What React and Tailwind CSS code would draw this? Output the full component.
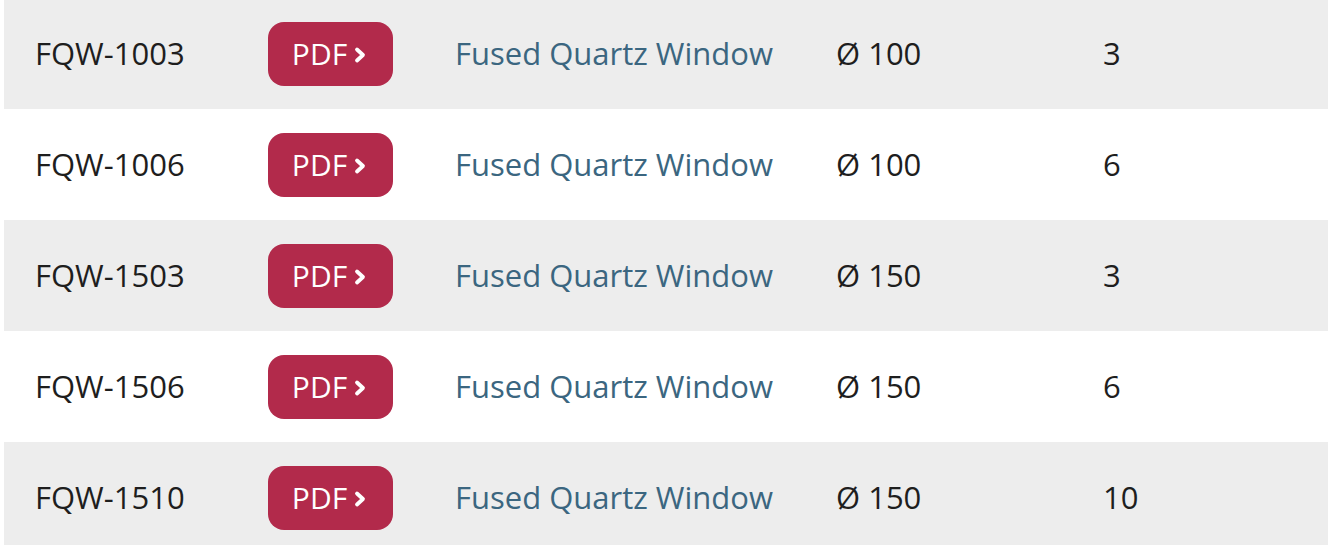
const rows = [
  { code: 'FQW-1003', dia: '100', qty: '3' },
  { code: 'FQW-1006', dia: '100', qty: '6' },
  { code: 'FQW-1503', dia: '150', qty: '3' },
  { code: 'FQW-1506', dia: '150', qty: '6' },
  { code: 'FQW-1510', dia: '150', qty: '10' },
];

function Chevron() {
  return (
    <svg width="16" height="18" viewBox="0 0 16 18" className="ml-[6px] mt-[2px]">
      <path d="M4 3.5 L10 9 L4 14.5" fill="none" stroke="white" strokeWidth="3.8" strokeLinecap="round" strokeLinejoin="round" />
    </svg>
  );
}

export default function App() {
  return (
    <div className="w-[1328px] h-[545px] overflow-hidden bg-white pl-[4px] font-['Open_Sans',sans-serif]">
      <div className="-mt-[2px]">
        {rows.map((r, i) => (
          <div
            key={r.code}
            className={`grid grid-cols-[233px_187px_381px_267px_1fr] items-center h-[111px] text-[31px] ${i % 2 === 0 ? 'bg-[#ededed]' : 'bg-white'}`}
          >
            <div className="pl-[31px] text-[#1e1e1e]">{r.code}</div>
            <div className="pl-[31px]">
              <button className="flex items-center justify-center w-[125px] h-[64px] rounded-[16px] bg-[#b22a4b] text-white text-[30px]">
                <span>PDF</span>
                <Chevron />
              </button>
            </div>
            <div className="pl-[31px] text-[#3b6680]">Fused Quartz Window</div>
            <div className="pl-[31px] text-[#1e1e1e]">Ø {r.dia}</div>
            <div className="pl-[31px] text-[#1e1e1e]">{r.qty}</div>
          </div>
        ))}
      </div>
    </div>
  );
}
